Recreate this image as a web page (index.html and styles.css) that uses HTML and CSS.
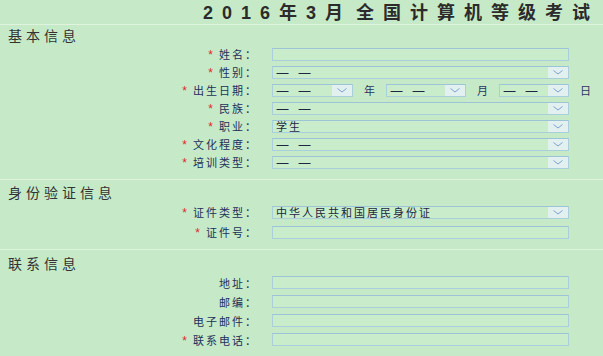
FILE: index.html
```html
<!DOCTYPE html>
<html lang="zh-CN">
<head>
    <meta charset="UTF-8">
    <title>2016年3月全国计算机等级考试</title>
    <link rel="stylesheet" href="styles.css">
</head>
<body>
    <div class="title">2016年3月<span class="gap">全</span>国计算机等级考试</div>

    <div class="section sec-basic">
        <div class="section-head">基本信息</div>
        <div class="row">
            <label class="lbl"><i class="req">*</i>姓名：</label>
            <span class="field"></span>
        </div>
        <div class="row">
            <label class="lbl"><i class="req">*</i>性别：</label>
            <span class="field select"><span class="dash">一一</span><span class="arrow"><svg width="10" height="5" viewBox="0 0 10 5"><polyline points="0.5,0.5 5,4 9.5,0.5" fill="none" stroke="#7aa3d6" stroke-width="1"/></svg></span></span>
        </div>
        <div class="row">
            <label class="lbl"><i class="req">*</i>出生日期：</label>
            <div class="date">
                <span class="field select d-year"><span class="dash">一一</span><span class="arrow"><svg width="10" height="5" viewBox="0 0 10 5"><polyline points="0.5,0.5 5,4 9.5,0.5" fill="none" stroke="#7aa3d6" stroke-width="1"/></svg></span></span>
                <span class="unit">年</span>
                <span class="field select d-month"><span class="dash">一一</span><span class="arrow"><svg width="10" height="5" viewBox="0 0 10 5"><polyline points="0.5,0.5 5,4 9.5,0.5" fill="none" stroke="#7aa3d6" stroke-width="1"/></svg></span></span>
                <span class="unit">月</span>
                <span class="field select d-day"><span class="dash">一一</span><span class="arrow"><svg width="10" height="5" viewBox="0 0 10 5"><polyline points="0.5,0.5 5,4 9.5,0.5" fill="none" stroke="#7aa3d6" stroke-width="1"/></svg></span></span>
                <span class="unit">日</span>
            </div>
        </div>
        <div class="row">
            <label class="lbl"><i class="req">*</i>民族：</label>
            <span class="field select"><span class="dash">一一</span><span class="arrow"><svg width="10" height="5" viewBox="0 0 10 5"><polyline points="0.5,0.5 5,4 9.5,0.5" fill="none" stroke="#7aa3d6" stroke-width="1"/></svg></span></span>
        </div>
        <div class="row">
            <label class="lbl"><i class="req">*</i>职业：</label>
            <span class="field select">学生<span class="arrow"><svg width="10" height="5" viewBox="0 0 10 5"><polyline points="0.5,0.5 5,4 9.5,0.5" fill="none" stroke="#7aa3d6" stroke-width="1"/></svg></span></span>
        </div>
        <div class="row">
            <label class="lbl"><i class="req">*</i>文化程度：</label>
            <span class="field select"><span class="dash">一一</span><span class="arrow"><svg width="10" height="5" viewBox="0 0 10 5"><polyline points="0.5,0.5 5,4 9.5,0.5" fill="none" stroke="#7aa3d6" stroke-width="1"/></svg></span></span>
        </div>
        <div class="row">
            <label class="lbl"><i class="req">*</i>培训类型：</label>
            <span class="field select"><span class="dash">一一</span><span class="arrow"><svg width="10" height="5" viewBox="0 0 10 5"><polyline points="0.5,0.5 5,4 9.5,0.5" fill="none" stroke="#7aa3d6" stroke-width="1"/></svg></span></span>
        </div>
    </div>

    <div class="section sec-id">
        <div class="section-head">身份验证信息</div>
        <div class="row">
            <label class="lbl"><i class="req">*</i>证件类型：</label>
            <span class="field select">中华人民共和国居民身份证<span class="arrow"><svg width="10" height="5" viewBox="0 0 10 5"><polyline points="0.5,0.5 5,4 9.5,0.5" fill="none" stroke="#7aa3d6" stroke-width="1"/></svg></span></span>
        </div>
        <div class="row">
            <label class="lbl"><i class="req">*</i>证件号：</label>
            <span class="field"></span>
        </div>
    </div>

    <div class="section sec-contact">
        <div class="section-head">联系信息</div>
        <div class="row">
            <label class="lbl">地址：</label>
            <span class="field"></span>
        </div>
        <div class="row">
            <label class="lbl">邮编：</label>
            <span class="field"></span>
        </div>
        <div class="row">
            <label class="lbl">电子邮件：</label>
            <span class="field"></span>
        </div>
        <div class="row">
            <label class="lbl"><i class="req">*</i>联系电话：</label>
            <span class="field"></span>
        </div>
    </div>
</body>
</html>
```

FILE: styles.css
```css
body {
    margin: 0;
    background: #c6eac8;
    font-family: "Noto Sans CJK SC", "Liberation Sans", sans-serif;
    color: #22305a;
    height: 356px;
    overflow: hidden;
}
.title {
    height: 24px;
    line-height: 26px;
    padding-left: 203px;
    font-family: "Liberation Sans", "Noto Sans CJK SC", sans-serif;
    font-size: 18px;
    font-weight: bold;
    letter-spacing: 9px;
    color: #2b2b2b;
    white-space: nowrap;
    border-bottom: 1px solid #def4df;
}
.title .gap {
    margin-left: 4px;
}
.section {
    border-bottom: 1px solid #def4df;
}
.section-head {
    height: 20px;
    line-height: 20px;
    padding-left: 8px;
    font-size: 14px;
    letter-spacing: 4px;
    color: #333;
}
.row {
    display: grid;
    grid-template-columns: 258px auto;
    column-gap: 14px;
    align-items: center;
    height: 18px;
}
.sec-basic { padding-bottom: 8px; }
.sec-id { padding-top: 2px; padding-bottom: 7px; }
.sec-id .row { height: 20px; }
.sec-contact { padding-top: 3px; border-bottom: none; }
.sec-contact .row { height: 19px; }
.lbl {
    text-align: right;
    font-size: 11px;
    letter-spacing: 2px;
    white-space: nowrap;
}
.req {
    font-style: normal;
    color: #e0262a;
    font-family: "Liberation Sans", sans-serif;
    font-size: 12px;
    letter-spacing: 0;
    margin-right: 6px;
}
.field {
    box-sizing: border-box;
    display: flex;
    align-items: center;
    width: 297px;
    height: 13px;
    padding-left: 3px;
    border: 1px solid #a8cfdb;
    border-top-color: #9cc4d6;
    background: #c9edcb;
    font-size: 11px;
    letter-spacing: 2px;
    color: #1d2740;
    white-space: nowrap;
    position: relative;
}
.dash {
    font-size: 13px;
    letter-spacing: 9px;
    line-height: 11px;
}
.select .arrow {
    position: absolute;
    right: 0;
    top: 0;
    bottom: 0;
    width: 20px;
    display: flex;
    align-items: center;
    justify-content: center;
    background: #e3f0f0;
}
.date {
    display: flex;
    align-items: center;
}
.date .d-year { width: 81px; }
.date .d-month { width: 80px; }
.date .d-day { width: 70px; }
.unit {
    width: 33px;
    text-align: center;
    font-size: 11px;
    color: #2a3560;
}
```
